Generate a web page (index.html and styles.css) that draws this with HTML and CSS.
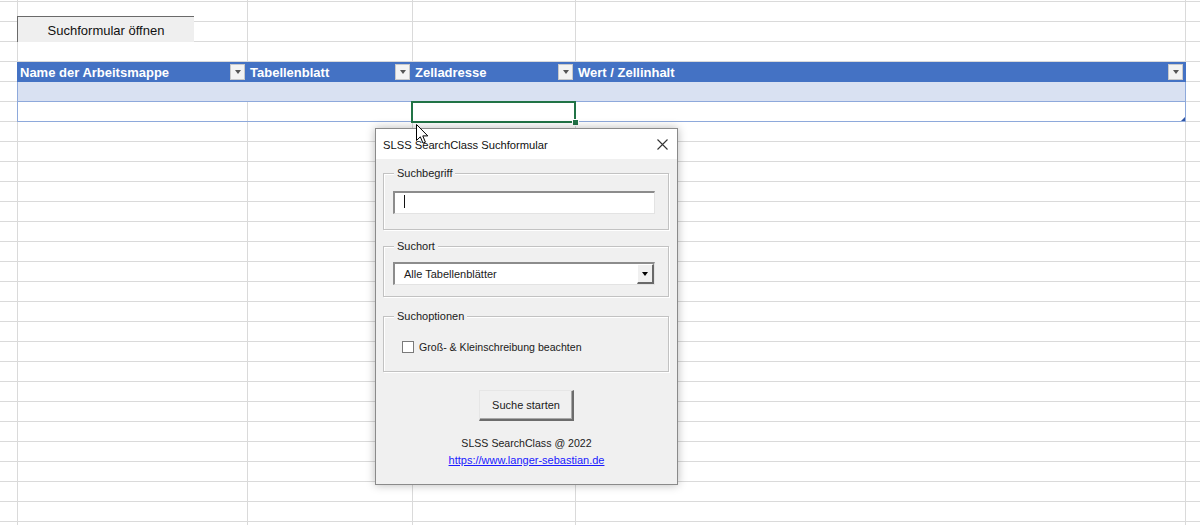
FILE: index.html
```html
<!DOCTYPE html>
<html lang="de">
<head>
<meta charset="utf-8">
<title>SLSS SearchClass</title>
<link rel="stylesheet" href="styles.css">
</head>
<body>
<div class="sheet">
  <div class="launch">Suchformular öffnen</div>

  <div class="xtable">
    <div class="xhead">
      <div class="hcell"><span>Name der Arbeitsmappe</span><i class="filter"></i></div>
      <div class="hcell"><span>Tabellenblatt</span><i class="filter"></i></div>
      <div class="hcell"><span>Zelladresse</span><i class="filter"></i></div>
      <div class="hcell"><span>Wert / Zellinhalt</span><i class="filter"></i></div>
    </div>
    <div class="xrow band"></div>
    <div class="xrow"></div>
    <div class="sel"><i class="sel-handle"></i></div>
    <i class="resize"></i>
  </div>

  <div class="dialog">
    <div class="titlebar">
      <span class="title">SLSS SearchClass Suchformular</span>
      <svg class="close" width="11" height="11" viewBox="0 0 11 11"><path d="M0.5 0.5 L10.5 10.5 M10.5 0.5 L0.5 10.5" stroke="#333" stroke-width="1.1" fill="none"/></svg>
    </div>
    <div class="dbody">
      <div class="group g1">
        <div class="gtitle">Suchbegriff</div>
        <div class="textbox"><span class="caret"></span></div>
      </div>
      <div class="group g2">
        <div class="gtitle">Suchort</div>
        <div class="combo">
          <span class="combo-text">Alle Tabellenblätter</span>
          <span class="drop"><i></i></span>
        </div>
      </div>
      <div class="group g3">
        <div class="gtitle">Suchoptionen</div>
        <div class="check"><span class="box"></span><span>Groß- &amp; Kleinschreibung beachten</span></div>
      </div>
      <div class="btn">Suche starten</div>
      <div class="foot">
        <div>SLSS SearchClass @ 2022</div>
        <a class="link">https://www.langer-sebastian.de</a>
      </div>
    </div>
  </div>

  <svg class="cursor" width="13" height="21" viewBox="0 0 13 21">
    <path d="M0.5 0.5 L0.5 16.5 L4.3 12.8 L7 19.2 L9.4 18.2 L6.8 11.9 L11.8 11.9 Z" fill="#fff" stroke="#000" stroke-width="1" stroke-linejoin="miter"/>
  </svg>
</div>
</body>
</html>
```

FILE: styles.css
```css
* { box-sizing: border-box; }

html, body {
  margin: 0;
  padding: 0;
  background: #fff;
}

.sheet {
  position: relative;
  width: 1200px;
  height: 525px;
  overflow: hidden;
  padding-top: 16px;
  font-family: "Liberation Sans", Arial, sans-serif;
  background-color: #fff;
  background-image:
    linear-gradient(#dadada, #dadada),
    linear-gradient(#dadada, #dadada),
    linear-gradient(#dadada, #dadada),
    linear-gradient(#dadada, #dadada),
    linear-gradient(#dadada, #dadada),
    repeating-linear-gradient(to bottom, #dadada 0 1px, transparent 1px 20px);
  background-size: 1px 100%, 1px 100%, 1px 100%, 1px 100%, 1px 100%, 100% 20px;
  background-position: 17px 0, 247px 0, 412px 0, 575px 0, 1185px 0, 0 1px;
  background-repeat: no-repeat, no-repeat, no-repeat, no-repeat, no-repeat, repeat;
}

/* launch button */
.launch {
  margin-left: 17px;
  width: 177px;
  height: 26px;
  background: #efefef;
  border-top: 1px solid #6a6a6a;
  border-left: 1px solid #6a6a6a;
  font-size: 13px;
  color: #111;
  display: flex;
  align-items: center;
  justify-content: center;
  padding-top: 1px;
}

/* excel table */
.xtable {
  position: relative;
  margin-top: 20px;
  margin-left: 17px;
  width: 1169px;
}

.xhead {
  display: grid;
  grid-template-columns: 230px 165px 163px 611px;
  height: 20px;
  background: #4472c4;
}

.hcell {
  display: flex;
  align-items: center;
  justify-content: space-between;
  padding-left: 3px;
  padding-right: 2px;
  color: #fff;
  font-weight: bold;
  font-size: 13px;
  white-space: nowrap;
}

.hcell:last-child { padding-right: 3px; }

.filter {
  width: 15px;
  height: 16px;
  background: #f3f3f3;
  border: 1px solid #c9c9c9;
  display: flex;
  align-items: center;
  justify-content: center;
}

.filter::after {
  content: "";
  border-left: 3.5px solid transparent;
  border-right: 3.5px solid transparent;
  border-top: 4px solid #555;
}

.xrow {
  height: 20px;
  border-left: 1px solid #8ea9db;
  border-right: 1px solid #8ea9db;
  border-bottom: 1px solid #8ea9db;
}

.xrow.band {
  background: #d9e1f2;
}

.sel {
  position: absolute;
  left: 394px;
  top: 39px;
  width: 165px;
  height: 22px;
  border: 2px solid #217346;
}

.sel-handle {
  position: absolute;
  right: -4px;
  bottom: -4px;
  width: 5px;
  height: 5px;
  background: #217346;
  border: 1px solid #fff;
  box-sizing: content-box;
  margin: -1px;
}

.resize {
  position: absolute;
  right: 1px;
  bottom: 1px;
  width: 0;
  height: 0;
  border-left: 4px solid transparent;
  border-bottom: 4px solid #2f55a4;
}

/* dialog */
.dialog {
  position: absolute;
  left: 375px;
  top: 128px;
  width: 303px;
  height: 357px;
  background: #f0f0f0;
  border: 1px solid #8a8a8a;
  box-shadow: 0 0 9px rgba(0, 0, 0, 0.28);
  font-family: "Liberation Sans", Arial, sans-serif;
  font-size: 11px;
  color: #1a1a1a;
}

.titlebar {
  height: 30px;
  background: #fff;
  display: flex;
  align-items: center;
  justify-content: space-between;
  padding-left: 7px;
  padding-right: 9px;
}

.title {
  font-size: 11.2px;
  color: #111;
  padding-top: 1px;
}

.close { display: block; }

.dbody {
  padding-top: 14px;
  padding-left: 7px;
}

.group {
  width: 286px;
  border: 1px solid #c2c2c2;
  box-shadow: 1px 1px 0 #fff, inset 1px 1px 0 #fff;
}

.g1 { height: 57px; }
.g2 { height: 51px; margin-top: 16px; }
.g3 { height: 56px; margin-top: 19px; }

.gtitle {
  width: fit-content;
  margin-top: -7px;
  margin-left: 10px;
  padding: 0 3px;
  height: 13px;
  line-height: 13px;
  background: #f0f0f0;
}

.textbox,
.combo {
  width: 262px;
  height: 23px;
  margin-left: 9px;
  background: #fff;
  border-style: solid;
  border-width: 2px 1px 1px 2px;
  border-color: #8c8c8c #e3e3e3 #e3e3e3 #8c8c8c;
}

.textbox {
  margin-top: 11px;
  padding: 2px 0 0 9px;
}

.caret {
  display: block;
  width: 1px;
  height: 13px;
  background: #111;
}

.combo {
  margin-top: 9px;
  display: flex;
  align-items: stretch;
}

.combo-text {
  flex: 1;
  padding-left: 9px;
  line-height: 20px;
}

.drop {
  width: 17px;
  background: #f0f0f0;
  border-style: solid;
  border-width: 1px 2px 2px 1px;
  border-color: #fff #696969 #696969 #fff;
  display: flex;
  align-items: center;
  justify-content: center;
}

.drop i {
  width: 0;
  height: 0;
  border-left: 3.5px solid transparent;
  border-right: 3.5px solid transparent;
  border-top: 4px solid #000;
}

.check {
  margin-top: 17px;
  margin-left: 18px;
  display: flex;
  align-items: center;
  gap: 5px;
  height: 13px;
  font-size: 10.6px;
}

.box {
  width: 12px;
  height: 12px;
  background: #fff;
  border: 1px solid #7a7a7a;
}

.btn {
  width: 95px;
  height: 31px;
  margin: 18px 0 0 96px;
  background: #f0f0f0;
  border-style: solid;
  border-width: 1px 2px 2px 1px;
  border-color: #e6e6e6 #6c6c6c #6c6c6c #e6e6e6;
  box-shadow: inset -1px -1px 0 #a8a8a8;
  display: flex;
  align-items: center;
  justify-content: center;
  font-size: 11px;
}

.foot {
  margin-top: 14px;
  margin-left: -7px;
  text-align: center;
  line-height: 17px;
  font-size: 10.6px;
  color: #222;
}

.link {
  color: #1a1aff;
  text-decoration: underline;
  font-size: 11px;
}

.cursor {
  position: absolute;
  left: 416px;
  top: 124px;
  z-index: 5;
}
```
